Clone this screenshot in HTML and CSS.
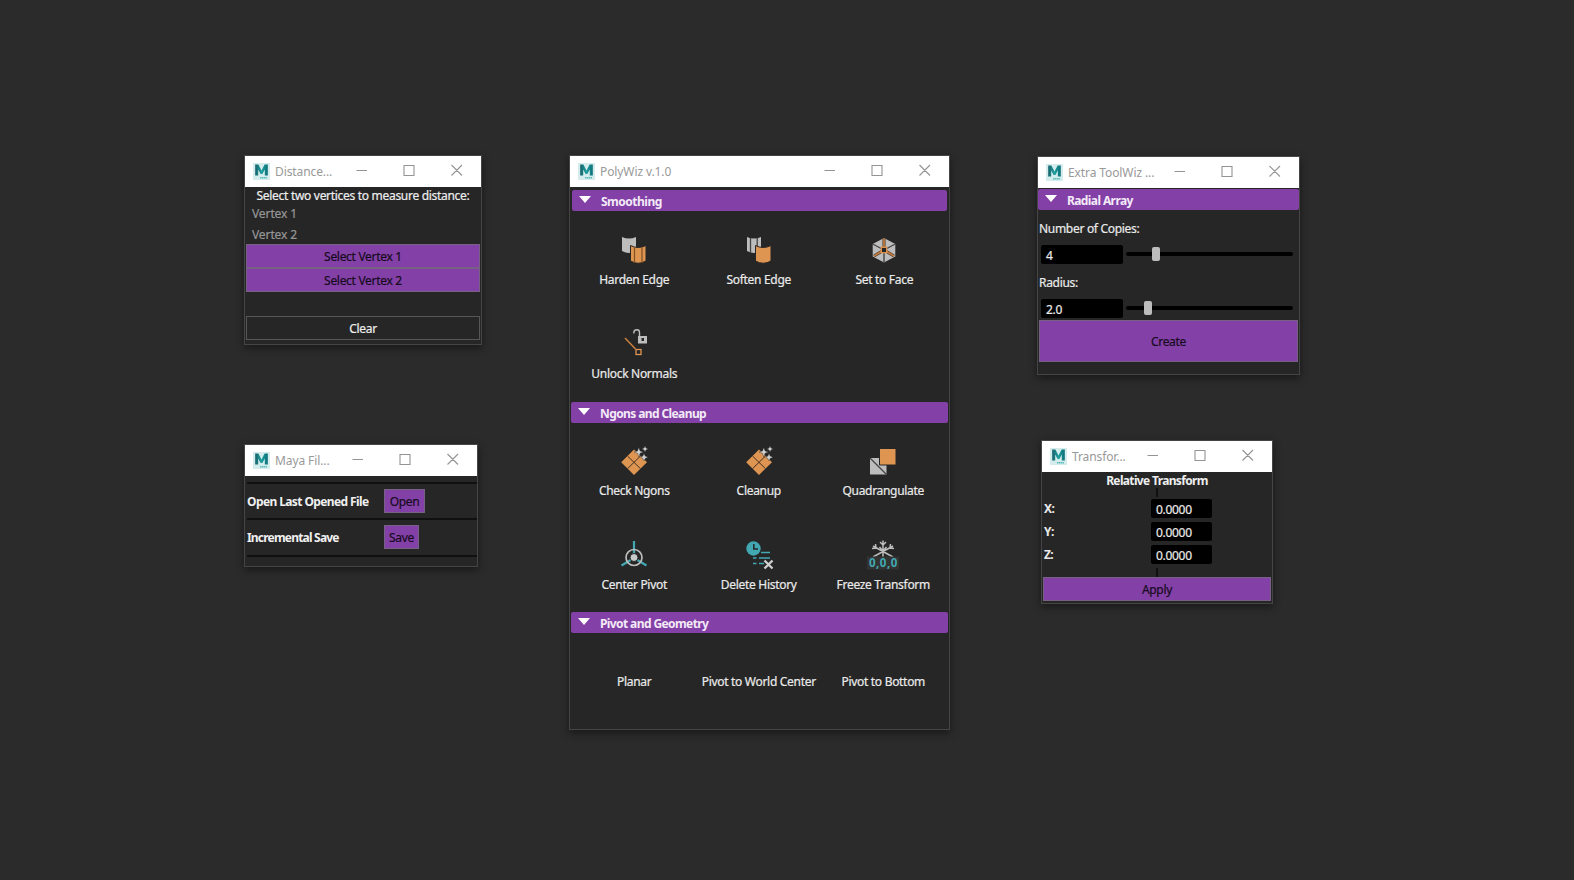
FILE: index.html
```html
<!DOCTYPE html>
<html lang="en">
<head>
<meta charset="utf-8">
<title>PolyWiz</title>
<link rel="stylesheet" href="styles.css">
</head>
<body>
<svg class="defs" width="0" height="0">
  <defs>
    <linearGradient id="teal" x1="0" y1="0" x2="1" y2="0"><stop offset="0" stop-color="#17616b"/><stop offset=".5" stop-color="#1fa0a0"/><stop offset="1" stop-color="#0d6f78"/></linearGradient>
    <symbol id="logo" viewBox="0 0 17 17"><rect width="17" height="17" fill="#d5ecec"/><path d="M2.2 12.5V1.5H5.4L8.5 7.4 11.6 1.5H14.8V12.5H11.8V6.6L9.4 11H7.6L5.2 6.6V12.5Z" fill="url(#teal)"/><path d="M7 14.7H14" stroke="#5dbcbc" stroke-width="1.4" stroke-dasharray="1.6 .4"/></symbol>
    <symbol id="controls" viewBox="0 0 108 14"><g fill="none" stroke="#949494" stroke-width="1.1"><path d="M1.500 7.5H12M49 2.5H59V12.5H49ZM96.5 2L107 12.5M107 2L96.5 12.5"/></g></symbol>
    <symbol id="harden" viewBox="0 0 32 32"><path d="M4 3Q11 6 18 3V17Q11 21 4 17Z" fill="#bdbdbd"/><path d="M12.5 11.5Q20 15.5 28 11.5V27Q20 31.5 12.5 27Z" fill="#df9552" stroke="#262626"/><path d="M16.5 13.5V29M24 13.5V29" stroke="#804f22" stroke-width="1.2"/></symbol>
    <symbol id="soften" viewBox="0 0 32 32"><path d="M4 3Q11 6 18 3V17Q11 21 4 17Z" fill="#bdbdbd"/><path d="M7.5 4V19M14.2 4V19" stroke="#444" stroke-width="1.3"/><path d="M12.5 11.5Q20 15.5 28 11.5V27Q20 31.5 12.5 27Z" fill="#df9552" stroke="#262626"/></symbol>
    <symbol id="face" viewBox="0 0 32 32"><path d="M16 4L27.3 10V22.5L16 28.5 4.7 22.5V10Z" fill="#bdbdbd"/><path d="M16 16V28.5M16 16L4.7 10M16 16L27.3 10" stroke="#444" stroke-width="1.4"/><path d="M16 16V4.5M16 16L6 22M16 16L26 22" stroke="#4a3727" stroke-width="3"/><path d="M16 16V4.5M16 16L6 22M16 16L26 22" stroke="#c9803f" stroke-width="1.6"/><rect x="13.3" y="13.3" width="5.4" height="5.4" fill="#262626" stroke="#df9552" stroke-width="1.3"/></symbol>
    <symbol id="unlock" viewBox="0 0 32 32"><path d="M7 10L17.500 21" stroke="#c9803f" stroke-width="1.5"/><rect x="18" y="21.5" width="5" height="5" fill="none" stroke="#df9552" stroke-width="1.3"/><path d="M15.8 5.500V4.500Q16 1.800 19 1.800Q21.500 1.800 21.500 4.500V8.500" fill="none" stroke="#bdbdbd" stroke-width="1.400"/><path d="M20 8H29V15.500H20Z" fill="#bdbdbd"/><rect x="23.500" y="10" width="2.500" height="3" fill="#262626"/></symbol>
    <symbol id="clean" viewBox="0 0 32 32"><path d="M16 4.500L29 17.300 16 30 3.200 17.300Z" fill="#df9552"/><path d="M9.500 11L22.500 23.700M22.500 11L9.500 23.700" stroke="#403022" stroke-width="1"/><g fill="#d0d0d0" stroke="#262626" stroke-width=".4"><path d="M20.800 2.500L22.100 5.900 25.500 7 22.100 8.300 20.800 12 19.500 8.300 16 7 19.500 5.900Z"/><path d="M27 1L28 3 30 4 28 5 27 7 26 5 24 4 26 3Z"/><path d="M26 8.500L27.200 11.100 30 12.300 27.200 13.500 26 16 24.800 13.500 22.500 12.300 24.800 11.100Z"/></g></symbol>
    <symbol id="quad" viewBox="0 0 32 32"><path d="M3 13H19.500V29.500H3Z" fill="#bdbdbd"/><path d="M3 13L19.500 29.500" stroke="#444" stroke-width="1.300"/><path d="M12.500 3.500H29V20H12.500Z" fill="#df9552" stroke="#262626"/></symbol>
    <symbol id="pivot" viewBox="0 0 32 32"><path d="M16 2V17M16 19L3.500 26.500M16 19L28.500 26.500" stroke="#41a8b2" stroke-width="2.200"/><circle cx="16" cy="18.500" r="8" fill="none" stroke="#bdbdbd" stroke-width="1.700"/><circle cx="16" cy="18.500" r="4" fill="#cacaca" stroke="#262626"/></symbol>
    <symbol id="history" viewBox="0 0 32 32"><circle cx="10.500" cy="9.500" r="7.200" fill="#41a8b2"/><path d="M10.800 5V10H15" fill="none" stroke="#262626" stroke-width="1.500"/><path d="M18 13.500H27M10 19H13.500M16 19H27M10 24.500H13.500M16 24.500H21" stroke="#41a8b2" stroke-width="1.600"/><path d="M21.500 21.500L29.500 29.500M29.500 21.500L21.500 29.500" stroke="#d0d0d0" stroke-width="2.300"/></symbol>
    <symbol id="freeze" viewBox="0 0 32 32"><g fill="none" stroke="#bdbdbd" stroke-width="1.500"><path d="M16 1.500V21M6 7L26 18M26 7L6 18M13 3L16 6 19 3M5 9.500L9 9 8.500 5M27 9.500L23 9 23.500 5M12.500 8L16 12 19.500 8"/></g><rect x="0" y="17.500" width="32" height="13" fill="#333"/><text x="16" y="27.800" text-anchor="middle" textLength="28" class="zero">0,0,0</text></symbol>
  </defs>
</svg>

<section class="window distance">
  <header class="titlebar"><svg class="logo"><use href="#logo"/></svg><span class="title">Distance...</span><svg class="controls"><use href="#controls"/></svg></header>
  <div class="prompt">Select two vertices to measure distance:</div>
  <div class="vertex first">Vertex 1</div>
  <div class="vertex">Vertex 2</div>
  <button class="btn">Select Vertex 1</button>
  <button class="btn">Select Vertex 2</button>
  <button class="btn clear">Clear</button>
</section>

<section class="window files">
  <header class="titlebar"><svg class="logo"><use href="#logo"/></svg><span class="title">Maya Fil...</span><svg class="controls"><use href="#controls"/></svg></header>
  <div class="filerow"><b class="openlabel">Open Last Opened File</b><button class="btn open">Open</button></div>
  <div class="filerow"><b class="savelabel">Incremental Save</b><button class="btn save">Save</button></div>
  <div class="rule"></div>
</section>

<section class="window poly">
  <header class="titlebar"><svg class="logo"><use href="#logo"/></svg><span class="title">PolyWiz v.1.0</span><svg class="controls"><use href="#controls"/></svg></header>
  <h2 class="bar smoothing"><i class="tri"></i><span>Smoothing</span></h2>
  <div class="grid g1">
    <div class="tool"><svg><use href="#harden"/></svg><span>Harden Edge</span></div>
    <div class="tool"><svg><use href="#soften"/></svg><span>Soften Edge</span></div>
    <div class="tool"><svg><use href="#face"/></svg><span>Set to Face</span></div>
    <div class="tool"><svg><use href="#unlock"/></svg><span>Unlock Normals</span></div>
  </div>
  <h2 class="bar"><i class="tri"></i><span>Ngons and Cleanup</span></h2>
  <div class="grid g2">
    <div class="tool"><svg><use href="#clean"/></svg><span>Check Ngons</span></div>
    <div class="tool"><svg><use href="#clean"/></svg><span>Cleanup</span></div>
    <div class="tool"><svg><use href="#quad"/></svg><span>Quadrangulate</span></div>
    <div class="tool"><svg><use href="#pivot"/></svg><span>Center Pivot</span></div>
    <div class="tool"><svg><use href="#history"/></svg><span>Delete History</span></div>
    <div class="tool"><svg><use href="#freeze"/></svg><span>Freeze Transform</span></div>
  </div>
  <h2 class="bar"><i class="tri"></i><span>Pivot and Geometry</span></h2>
  <div class="grid g3">
    <div class="tool"><span>Planar</span></div>
    <div class="tool"><span>Pivot to World Center</span></div>
    <div class="tool"><span>Pivot to Bottom</span></div>
  </div>
</section>

<section class="window extra">
  <header class="titlebar"><svg class="logo"><use href="#logo"/></svg><span class="title">Extra ToolWiz ...</span><svg class="controls"><use href="#controls"/></svg></header>
  <h2 class="bar"><i class="tri"></i><span>Radial Array</span></h2>
  <div class="label copies">Number of Copies:</div>
  <div class="slide"><div class="field">4</div><div class="track"><i class="thumb t1"></i></div></div>
  <div class="label radius">Radius:</div>
  <div class="slide"><div class="field">2.0</div><div class="track"><i class="thumb t2"></i></div></div>
  <button class="btn create">Create</button>
</section>

<section class="window transform">
  <header class="titlebar"><svg class="logo"><use href="#logo"/></svg><span class="title">Transfor...</span><svg class="controls"><use href="#controls"/></svg></header>
  <b class="heading">Relative Transform</b>
  <i class="tick"></i>
  <div class="axis"><b>X:</b><div class="field">0.0000</div></div>
  <div class="axis"><b>Y:</b><div class="field">0.0000</div></div>
  <div class="axis"><b>Z:</b><div class="field">0.0000</div></div>
  <i class="tick end"></i>
  <button class="btn apply">Apply</button>
</section>
</body>
</html>
```
FILE: styles.css
```css
* { box-sizing: border-box; }
body { margin: 0; width: 1574px; height: 880px; overflow: hidden; position: relative; background: #2b2b2b; color: #eaeaea; font: 400 12px/16px "Noto Sans", "Open Sans", sans-serif; letter-spacing: -.3px; white-space: nowrap; -webkit-text-stroke: .2px; }
b, h2 { letter-spacing: -.6px; -webkit-text-stroke: 0; }
.defs { position: absolute; }
.window { position: absolute; display: flex; flex-direction: column; background: #262626; border: 1px solid #454545; box-shadow: 0 3px 8px rgba(0,0,0,.45); }
.distance { left: 244px; top: 155px; width: 238px; height: 190px; }
.files { left: 244px; top: 444px; width: 234px; height: 123px; }
.poly { left: 569px; top: 155px; width: 381px; height: 575px; }
.extra { left: 1037px; top: 156px; width: 263px; height: 219px; }
.transform { left: 1041px; top: 440px; width: 232px; height: 164px; }

.titlebar { height: 31px; flex: none; display: flex; align-items: center; background: #fff; padding: 0 18px 0 8px; color: #999; }
.logo { width: 17px; height: 17px; margin: 0 5px 1px 0; }
.title { letter-spacing: -.1px; padding-top: 1px; -webkit-text-stroke: 0; }
.controls { width: 108px; height: 14px; margin: 0 0 3px auto; }

.btn { font: inherit; letter-spacing: inherit; color: #160b1d; background: #8340a7; border: 1px solid #766083; height: 24px; padding: 2px 0 0; flex: none; margin: 0 1px; }

.prompt { text-align: center; margin-top: 1px; color: #eee; }
.vertex { color: #969696; padding-left: 7px; height: 16px; margin: 5px 0; letter-spacing: -.1px; }
.vertex.first { margin: 2px 0 0; }
.vertex + .btn { margin-top: -4px; }
.btn.clear { margin-top: 24px; background: #262626; border-color: #565656; color: #eee; }

.filerow { height: 36px; border-top: 2px solid #101010; margin: 0 0 0 2px; display: flex; align-items: center; color: #f0f0f0; }
.titlebar + .filerow { margin-top: 6px; }
.filerow + .filerow { height: 37px; }
.filerow + .filerow .btn { margin-top: -1px; }
.filerow b { width: 136px; padding-top: 1px; }
.savelabel { letter-spacing: -.8px; }
.btn.open { width: 41px; }
.btn.save { width: 35px; }
.rule { height: 2px; background: #101010; margin-left: 2px; }

.bar { flex: none; height: 21px; margin: 0 1px; border-radius: 2px; background: #8340a7; display: flex; align-items: center; padding: 2px 0 0 7px; font-size: 12px; line-height: 16px; letter-spacing: -.6px; color: #f3eaf7; }
.bar.smoothing { margin: 3px 2px 0 2px; }
.bar.smoothing span { padding-top: 1px; letter-spacing: -.5px; }
.tri { border: 6px solid transparent; border-top: 7px solid #fff; border-bottom: 0; margin: -5px 10px 0 0; }
.grid { display: grid; grid-template-columns: repeat(3, 124.5px); padding-left: 1px; grid-auto-rows: 94px; flex: none; }
.g1 { height: 191px; padding: 23px 0 0 2px; }
.g1 .tool:nth-child(3) { padding-left: 2px; }
.g2 { height: 189px; padding: 22px 0 0 2px; }
.g3 { padding: 41px 0 0 2px; }
.tool { display: flex; flex-direction: column; align-items: center; }
.tool svg { width: 32px; height: 32px; margin-bottom: 6px; }
.zero { font: bold 11.5px "Noto Sans", sans-serif; fill: #41a8b2; }

.extra .bar { margin: 1px 0 0; }
.label { height: 16px; padding-left: 1px; }
.copies { margin: 11px 0 8px; }
.radius { margin: 11px 0 8px; }
.slide { display: flex; align-items: center; padding-left: 3px; height: 19px; }
.field { background: #000; border-radius: 2px; height: 19px; width: 82px; padding: 3px 0 0 5px; line-height: 15px; }
.track { margin: -2px 0 0 3px; width: 167px; height: 4px; border-radius: 2px; background: #000; }
.thumb { display: block; width: 8px; height: 14px; margin-top: -5px; border-radius: 2px; background: #bdbdbd; }
.t1 { margin-left: 26px; }
.t2 { margin-left: 18px; }
.btn.create { height: 42px; margin: 2px 1px 0; padding-top: 1px; }

.heading { text-align: center; height: 16px; padding-top: 1px; color: #eee; letter-spacing: -.65px; }
.tick { width: 2px; height: 9px; background: #101010; margin: 0 0 0 114px; flex: none; }
.axis { display: flex; height: 23px; flex: none; padding-left: 2px; align-items: center; }
.axis b { width: 107px; }
.axis .field { width: 61px; }
.tick.end { margin: 2px 0 0 114px; }
```
